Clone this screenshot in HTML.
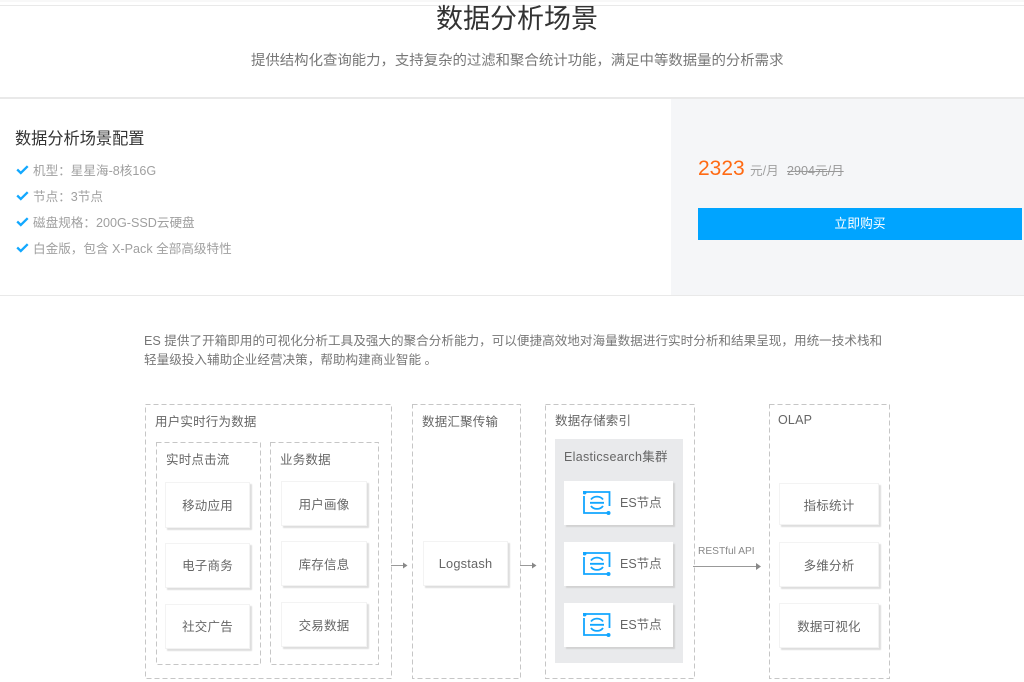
<!DOCTYPE html>
<html lang="zh-CN">
<head>
<meta charset="utf-8">
<title>数据分析场景</title>
<style>
html,body{margin:0;padding:0;background:#fff;}
body{width:1024px;height:682px;position:relative;overflow:hidden;font-family:"Liberation Sans","Noto Sans CJK SC",sans-serif;color:#666;}
#w{position:absolute;left:0;top:0;width:1024px;height:682px;filter:blur(.35px);}
.a{position:absolute;white-space:nowrap;}
.line{position:absolute;left:0;width:1024px;background:#e9e9e9;}
.li{position:absolute;left:33px;font-size:12.6px;line-height:18px;color:#a0a0a0;white-space:nowrap;}
.ck{position:absolute;left:16px;width:13px;height:10px;}
.t{position:absolute;font-size:12.5px;line-height:18px;color:#666;white-space:nowrap;letter-spacing:.2px;}
.c{position:absolute;background:#fff;box-sizing:border-box;border:1px solid #f3f3f3;box-shadow:2px 2px 1px #dedede;font-size:12.5px;color:#666;display:flex;align-items:center;justify-content:center;letter-spacing:.2px;white-space:nowrap;padding-bottom:2px;}
.n{padding-bottom:0;}
.e{position:absolute;left:564px;width:109px;height:44px;background:#fff;box-shadow:2px 2px 1px #d2d2d2;}
.e svg{position:absolute;left:19px;top:10px;}
.e span{position:absolute;left:56px;top:13px;font-size:12.5px;line-height:18px;color:#666;white-space:nowrap;}
svg{display:block;}
</style>
</head>
<body>
<div id="w">
<div class="a" style="left:0;top:0;width:1024px;height:2px;background:#f8f8f8;"></div>
<div class="line" style="top:5px;height:1px;"></div>
<div class="line" style="top:97px;height:2px;"></div>
<div class="line" style="top:295px;height:1px;"></div>

<div class="a" style="left:436px;top:1px;font-size:27px;line-height:36px;color:#333;">数据分析场景</div>
<div class="a" style="left:251px;top:51px;font-size:14.4px;line-height:21px;color:#777;">提供结构化查询能力，支持复杂的过滤和聚合统计功能，满足中等数据量的分析需求</div>

<div class="a" style="left:15px;top:128px;font-size:16.2px;line-height:23px;color:#333;">数据分析场景配置</div>

<svg class="ck" style="top:165px" viewBox="0 0 13 10"><path d="M1.200 4.500 L4.800 8 L11.700 1.200" fill="none" stroke="#12a8ff" stroke-width="2.300"/></svg>
<div class="li" style="top:162px">机型：星星海-8核16G</div>
<svg class="ck" style="top:191px" viewBox="0 0 13 10"><path d="M1.200 4.500 L4.800 8 L11.700 1.200" fill="none" stroke="#12a8ff" stroke-width="2.300"/></svg>
<div class="li" style="top:188px">节点：3节点</div>
<svg class="ck" style="top:217px" viewBox="0 0 13 10"><path d="M1.200 4.500 L4.800 8 L11.700 1.200" fill="none" stroke="#12a8ff" stroke-width="2.300"/></svg>
<div class="li" style="top:214px">磁盘规格：200G-SSD云硬盘</div>
<svg class="ck" style="top:243px" viewBox="0 0 13 10"><path d="M1.200 4.500 L4.800 8 L11.700 1.200" fill="none" stroke="#12a8ff" stroke-width="2.300"/></svg>
<div class="li" style="top:240px">白金版，包含 X-Pack 全部高级特性</div>

<div class="a" style="left:671px;top:99px;width:353px;height:196px;background:#f5f6f8;"></div>
<div class="a" style="left:698px;top:155px;font-size:21px;line-height:27px;color:#ff6a13;">2323</div>
<div class="a" style="left:750px;top:162px;font-size:12.6px;line-height:18px;color:#a0a0a0;">元/月</div>
<div class="a" style="left:787px;top:162px;font-size:12.6px;line-height:18px;color:#999;text-decoration:line-through;">2904元/月</div>
<div class="a" style="left:698px;top:208px;width:324px;height:32px;background:#00a4ff;color:#fff;font-size:12.800px;line-height:31px;text-align:center;">立即购买</div>

<div class="a" style="left:144px;top:332px;font-size:12.6px;line-height:19px;color:#777;">ES 提供了开箱即用的可视化分析工具及强大的聚合分析能力，可以便捷高效地对海量数据进行实时分析和结果呈现，用统一技术栈和</div>
<div class="a" style="left:144px;top:351px;font-size:12.6px;line-height:19px;color:#777;">轻量级投入辅助企业经营决策，帮助构建商业智能 。</div>

<svg class="a" style="left:0;top:0;" width="1024" height="682"><g fill="none" stroke="#c6c6c6" stroke-width="1" stroke-dasharray="5 3">
<rect x="145.500" y="404.500" width="246" height="274"/>
<rect x="156.500" y="442.500" width="104" height="222"/>
<rect x="270.500" y="442.500" width="108" height="222"/>
<rect x="412.500" y="404.500" width="108" height="274"/>
<rect x="545.500" y="404.500" width="149" height="274"/>
<rect x="769.500" y="404.500" width="120" height="274"/>
</g></svg>

<div class="t" style="left:155px;top:413px;">用户实时行为数据</div>
<div class="t" style="left:166px;top:451px;">实时点击流</div>
<div class="t" style="left:280px;top:451px;">业务数据</div>

<div class="c" style="left:165px;top:482px;width:85px;height:46px;">移动应用</div>
<div class="c" style="left:165px;top:543px;width:85px;height:45px;">电子商务</div>
<div class="c" style="left:165px;top:604px;width:85px;height:45px;">社交广告</div>
<div class="c n" style="left:281px;top:481px;width:86px;height:45px;">用户画像</div>
<div class="c n" style="left:281px;top:541px;width:86px;height:45px;">库存信息</div>
<div class="c n" style="left:281px;top:602px;width:86px;height:45px;">交易数据</div>

<svg class="a" style="left:391px;top:560px;" width="18" height="11"><path d="M0 5.500H13" stroke="#999" stroke-width="1"/><path d="M12 2.500L16.500 5.500L12 8.500Z" fill="#888"/></svg>

<div class="t" style="left:422px;top:413px;">数据汇聚传输</div>
<div class="c n" style="left:423px;top:541px;width:85px;height:45px;font-size:12.800px;">Logstash</div>

<svg class="a" style="left:520px;top:560px;" width="18" height="11"><path d="M0 5.500H13" stroke="#999" stroke-width="1"/><path d="M12 2.500L16.500 5.500L12 8.500Z" fill="#888"/></svg>

<div class="t" style="left:555px;top:412px;">数据存储索引</div>
<div class="a" style="left:555px;top:439px;width:128px;height:224px;background:#e9eaec;"></div>
<div class="t" style="left:564px;top:448px;letter-spacing:.3px;">Elasticsearch集群</div>

<div class="e" style="top:481px;">
<svg width="28" height="24" viewBox="0 0 28 24"><path d="M1 1H26.500V15M26 22H1V5" fill="none" stroke="#12a6ff" stroke-width="1.800"/><circle cx="1.500" cy="1.500" r="2" fill="#12a6ff"/><circle cx="25.500" cy="22" r="2" fill="#12a6ff"/><path d="M8 8.500A7 6 0 0 1 20 8.500M8 15A7 6 0 0 0 20 15M7 11.800H21" fill="none" stroke="#12a6ff" stroke-width="1.800"/></svg>
<span>ES节点</span></div>
<div class="e" style="top:542px;">
<svg width="28" height="24" viewBox="0 0 28 24"><path d="M1 1H26.500V15M26 22H1V5" fill="none" stroke="#12a6ff" stroke-width="1.800"/><circle cx="1.500" cy="1.500" r="2" fill="#12a6ff"/><circle cx="25.500" cy="22" r="2" fill="#12a6ff"/><path d="M8 8.500A7 6 0 0 1 20 8.500M8 15A7 6 0 0 0 20 15M7 11.800H21" fill="none" stroke="#12a6ff" stroke-width="1.800"/></svg>
<span>ES节点</span></div>
<div class="e" style="top:603px;">
<svg width="28" height="24" viewBox="0 0 28 24"><path d="M1 1H26.500V15M26 22H1V5" fill="none" stroke="#12a6ff" stroke-width="1.800"/><circle cx="1.500" cy="1.500" r="2" fill="#12a6ff"/><circle cx="25.500" cy="22" r="2" fill="#12a6ff"/><path d="M8 8.500A7 6 0 0 1 20 8.500M8 15A7 6 0 0 0 20 15M7 11.800H21" fill="none" stroke="#12a6ff" stroke-width="1.800"/></svg>
<span>ES节点</span></div>

<div class="a" style="left:698px;top:544px;font-size:10.200px;line-height:15px;color:#888;">RESTful API</div>
<svg class="a" style="left:693px;top:561px;" width="70" height="11"><path d="M0 5.500H64" stroke="#999" stroke-width="1"/><path d="M63 2L68 5.500L63 9Z" fill="#888"/></svg>

<div class="t" style="left:778px;top:411px;">OLAP</div>
<div class="c n" style="left:779px;top:483px;width:100px;height:42px;">指标统计</div>
<div class="c n" style="left:779px;top:542px;width:100px;height:45px;">多维分析</div>
<div class="c n" style="left:779px;top:603px;width:100px;height:45px;">数据可视化</div>
</div>
</body>
</html>
